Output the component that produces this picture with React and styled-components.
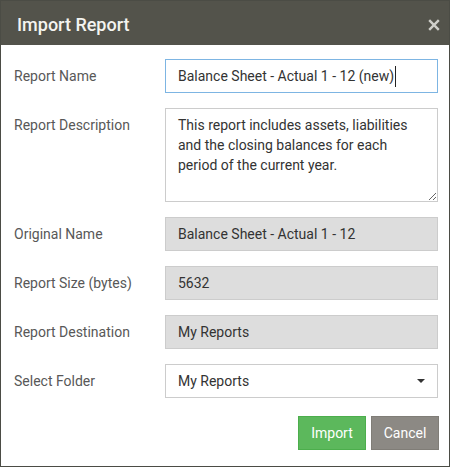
import React from "react";
import styled, { createGlobalStyle } from "styled-components";

const Global = createGlobalStyle`
  html, body { margin: 0; padding: 0; background: #fff; }
  body { font-family: Roboto, "Liberation Sans", Arial, sans-serif; }
  * { box-sizing: border-box; }
`;

const Dialog = styled.div`
  width: 450px;
  height: 467px;
  border: 1px solid #4b4c45;
  background: #fff;
  display: flex;
  flex-direction: column;
`;

const Header = styled.div`
  height: 44px;
  background: #53534b;
  display: flex;
  align-items: center;
  justify-content: space-between;
  padding: 0 9px 0 16px;
`;

const Title = styled.h1`
  margin: 0;
  font-size: 18px;
  font-weight: 500;
  color: #f4f4f0;
  padding-top: 2px;
`;

const CloseButton = styled.button`
  border: 0;
  background: transparent;
  padding: 0;
  width: 13px;
  height: 13px;
  display: flex;
  align-items: center;
  justify-content: center;
  cursor: pointer;
  margin-top: 4px;
`;

const Body = styled.div`
  flex: 1;
  padding: 14px 10px 0 13px;
  display: flex;
  flex-direction: column;
`;

const Row = styled.div`
  display: grid;
  grid-template-columns: 151px 273px;
  align-items: start;
  margin-bottom: 15px;
`;

const Label = styled.label`
  font-size: 14px;
  line-height: 20px;
  padding-top: 7px;
  color: #585858;
`;

const Field = styled.div`
  position: relative;
`;

const Caret = styled.span`
  position: absolute;
  top: 7px;
  left: ${(p) => p.$left}px;
  width: 1px;
  height: 21px;
  background: #222;
`;

const Input = styled.input`
  height: 34px;
  width: 100%;
  padding: 6px 12px;
  font: inherit;
  font-size: 14px;
  line-height: 20px;
  color: #333;
  border: 1px solid ${(p) => (p.$focused ? "#7db5e3" : "#cccccc")};
  background: ${(p) => (p.readOnly ? "#dddddd" : "#fff")};
  outline: none;
  border-radius: 0;
  caret-color: transparent;
`;

const TextArea = styled.textarea`
  height: 94px;
  width: 100%;
  padding: 6px 12px;
  font: inherit;
  font-size: 14px;
  line-height: 20px;
  color: #333;
  border: 1px solid #cccccc;
  background: #fff;
  outline: none;
  border-radius: 0;
  resize: vertical;
  display: block;
`;

const SelectBox = styled.div`
  height: 34px;
  width: 100%;
  padding: 6px 12px;
  font-size: 14px;
  line-height: 20px;
  color: #333;
  border: 1px solid #cccccc;
  background: #fff;
  display: flex;
  align-items: center;
  justify-content: space-between;
`;

const Footer = styled.div`
  display: flex;
  justify-content: flex-end;
  gap: 5px;
  padding-top: 3px;
`;

const Button = styled.button`
  height: 34px;
  width: 68px;
  font: inherit;
  font-size: 14px;
  color: #fff;
  border: 1px solid ${(p) => (p.$variant === "success" ? "#4cae4c" : "#807d77")};
  background: ${(p) => (p.$variant === "success" ? "#5cb85c" : "#8c8984")};
  border-radius: 0;
  cursor: pointer;
  padding: 0;
`;

export default function App() {
  return (
    <>
      <Global />
      <Dialog>
        <Header>
          <Title>Import Report</Title>
          <CloseButton aria-label="Close">
            <svg width="12" height="12" viewBox="0 0 12 12">
              <path d="M1.2 1.2 L10.8 10.8 M10.8 1.2 L1.2 10.8" stroke="#cfcfca" strokeWidth="2.4" />
            </svg>
          </CloseButton>
        </Header>
        <Body>
          <Row>
            <Label>Report Name</Label>
            <Field>
              <Input $focused defaultValue="Balance Sheet - Actual 1 - 12 (new)" />
              <Caret $left={230} />
            </Field>
          </Row>
          <Row>
            <Label>Report Description</Label>
            <TextArea defaultValue="This report includes assets, liabilities and the closing balances for each period of the current year." />
          </Row>
          <Row>
            <Label>Original Name</Label>
            <Input readOnly value="Balance Sheet - Actual 1 - 12" />
          </Row>
          <Row>
            <Label>Report Size (bytes)</Label>
            <Input readOnly value="5632" />
          </Row>
          <Row>
            <Label>Report Destination</Label>
            <Input readOnly value="My Reports" />
          </Row>
          <Row>
            <Label>Select Folder</Label>
            <SelectBox>
              <span>My Reports</span>
              <svg width="8" height="4" viewBox="0 0 8 4">
                <path d="M0 0 H8 L4 4 Z" fill="#333" />
              </svg>
            </SelectBox>
          </Row>
          <Footer>
            <Button $variant="success">Import</Button>
            <Button $variant="default">Cancel</Button>
          </Footer>
        </Body>
      </Dialog>
    </>
  );
}
